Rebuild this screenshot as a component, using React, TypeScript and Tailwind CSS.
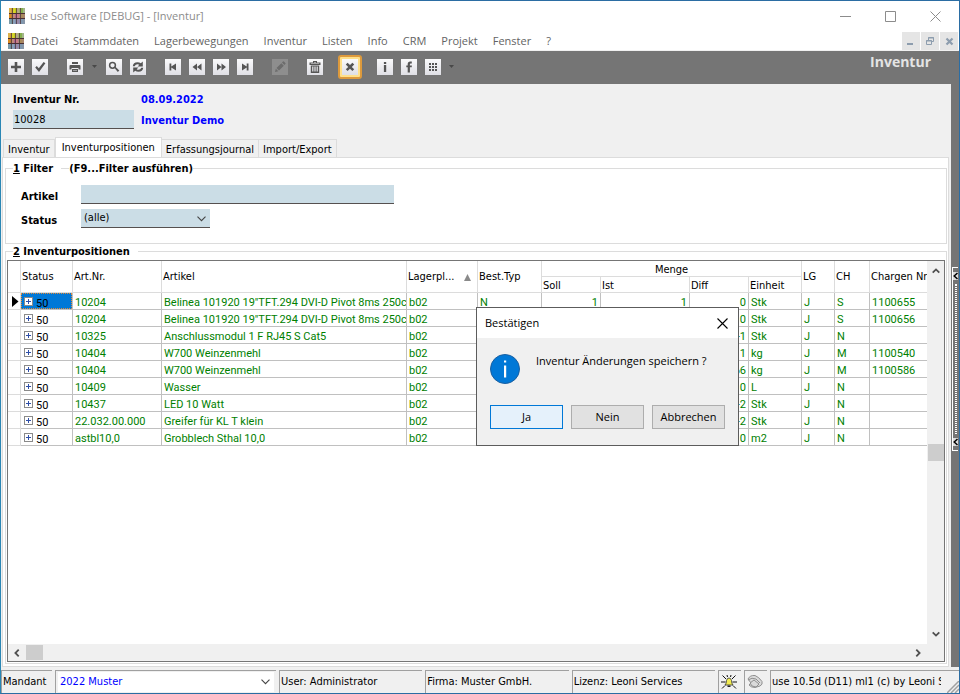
import { useState } from "react"
import type { ReactNode } from "react"

const MENU_ITEMS = ["Datei", "Stammdaten", "Lagerbewegungen", "Inventur", "Listen", "Info", "CRM", "Projekt", "Fenster", "?"]

const TABS = ["Inventur", "Inventurpositionen", "Erfassungsjournal", "Import/Export"]

type Position = {
    artNr: string
    artikel: string
    typ?: string
    soll?: string
    ist?: string
    diff: string
    einheit: string
    ch: string
    charge: string
}

const POSITIONS: Position[] = [
    { artNr: "10204", artikel: 'Belinea 101920 19"TFT.294 DVI-D Pivot 8ms 250cd', typ: "N", soll: "1", ist: "1", diff: "0", einheit: "Stk", ch: "S", charge: "1100655" },
    { artNr: "10204", artikel: 'Belinea 101920 19"TFT.294 DVI-D Pivot 8ms 250cd', diff: "0", einheit: "Stk", ch: "S", charge: "1100656" },
    { artNr: "10325", artikel: "Anschlussmodul 1 F RJ45 S Cat5", diff: "-1", einheit: "Stk", ch: "N", charge: "" },
    { artNr: "10404", artikel: "W700 Weinzenmehl", diff: "1", einheit: "kg", ch: "M", charge: "1100540" },
    { artNr: "10404", artikel: "W700 Weinzenmehl", diff: "66", einheit: "kg", ch: "M", charge: "1100586" },
    { artNr: "10409", artikel: "Wasser", diff: "0", einheit: "L", ch: "N", charge: "" },
    { artNr: "10437", artikel: "LED 10 Watt", diff: "-2", einheit: "Stk", ch: "N", charge: "" },
    { artNr: "22.032.00.000", artikel: "Greifer für KL T klein", diff: "-2", einheit: "Stk", ch: "N", charge: "" },
    { artNr: "astbl10,0", artikel: "Grobblech Sthal 10,0", diff: "0", einheit: "m2", ch: "N", charge: "" },
]

function AppLogo() {
    const tops = ["#dcb04a", "#c99a3e", "#d6d52a", "#c3c81c", "#b7a98a", "#9fb06a", "#86b04e", "#a3b58a"]
    const mids = ["#d98a1f", "#b87a3a", "#c08a7a", "#b0608c", "#c77a8a", "#b08a7a", "#a88a5a", "#a8866a"]
    const lows = ["#7a9aa8", "#6f8f9c", "#8aa0b8", "#7f8cb0", "#9a8aa8", "#8a90b0", "#7f98b0", "#8796a8"]
    return (
        <svg width="16" height="16" viewBox="0 0 16 16" aria-hidden="true">
            {tops.map((color, i) => (
                <g key={color}>
                    <rect x={i * 2} y="0" width="2" height="6" fill={color} />
                    <rect x={i * 2} y="6" width="2" height="5" fill={mids[i]} />
                    <rect x={i * 2} y="11" width="2" height="5" fill={lows[i]} />
                </g>
            ))}
            <path d="M3.500 0v16M7.500 0v16M11.500 0v16" stroke="#4a3436" strokeOpacity=".75" />
            <path d="M0 5.500h16M0 10.500h16" stroke="#4a2f34" />
        </svg>
    )
}

function Chevron({ className = "" }: { className?: string }) {
    return (
        <svg width="9" height="6" viewBox="0 0 9 6" className={className} aria-hidden="true">
            <path d="M.5 .7 4.5 4.7 8.5 .7" fill="none" stroke="#444" strokeWidth="1.1" />
        </svg>
    )
}

function ScrollArrow({ rotate = "" }: { rotate?: string }) {
    return (
        <svg width="8" height="8" viewBox="0 0 8 8" className={rotate} aria-hidden="true">
            <path d="M.7 5.7 4 2.4 7.3 5.7" fill="none" stroke="#505050" strokeWidth="1.8" />
        </svg>
    )
}

function ToolButton({ label, className = "", dim, children }: { label: string; className?: string; dim?: boolean; children: ReactNode }) {
    return (
        <button aria-label={label} className={`w-4 h-4 shrink-0 ${dim ? "bg-[#8e8e8e]" : "bg-linear-to-b from-[#fafafb] to-[#dfdfe5]"} ${className}`}>
            <svg width="16" height="16" viewBox="0 0 16 16" fill={dim ? "#6c6c6c" : "#555555"}>
                {children}
            </svg>
        </button>
    )
}

function DropArrow({ className = "" }: { className?: string }) {
    return (
        <svg width="5" height="3" viewBox="0 0 5 3" className={className} aria-hidden="true">
            <path d="M0 0h5L2.5 3z" fill="#484848" />
        </svg>
    )
}

function Toolbar() {
    return (
        <div className="h-[33px] shrink-0 flex items-center justify-between bg-[#757575] pl-[7px] pr-7">
            <div className="flex items-center gap-2 pb-0.5">
                <ToolButton label="Neu">
                    <path d="M6.7 3h2.6v3.7H13v2.6H9.3V13H6.7V9.3H3V6.7h3.7z" />
                </ToolButton>
                <ToolButton label="Speichern">
                    <path d="M3.2 8.6 4.8 7l2 2.2L11.6 3l1.8 1.3L7 13z" />
                </ToolButton>
                <ToolButton label="Drucken" className="ml-[11px]">
                    <path d="M5 3h6v2H5zM3.500 6h9q1 0 1 1v3.500h-2V9h-7v1.500h-2V7q0-1 1-1z" />
                    <path d="M5 10h6v3H5zM6 10.900h4v.6H6z" fillRule="evenodd" />
                </ToolButton>
                <DropArrow className="mx-px" />
                <ToolButton label="Suchen">
                    <circle cx="6.500" cy="6.300" r="2.900" fill="none" stroke="#555555" strokeWidth="1.500" />
                    <path d="m8.400 8.800 1-1 3.900 3.700-1.500 1.500z" />
                </ToolButton>
                <ToolButton label="Aktualisieren">
                    <path d="M2.800 7.200Q3.200 3.300 7.500 3.200q2 0 3.300 1L12.800 2.400v5H7.600l1.700-1.700Q8.600 5.100 7.500 5.200 5.400 5.300 4.700 7.200z" />
                    <path d="M13.200 8.800Q12.800 12.700 8.500 12.800q-2 0-3.300-1L3.200 13.600v-5h5.200L6.700 10.300q.7.600 1.800.5 2.100-.1 2.800-2z" />
                </ToolButton>
                <ToolButton label="Erster" className="ml-[11px]">
                    <path d="M4.500 4.500h1.800v3L11 4.500v7L6.300 8.600v2.900H4.500z" />
                </ToolButton>
                <ToolButton label="Zurück">
                    <path d="M8 4.500v7L3.500 8zM12.500 4.500v7L8 8z" />
                </ToolButton>
                <ToolButton label="Weiter">
                    <path d="M4 4.500v7L8.500 8zM8.500 4.500v7L13 8z" />
                </ToolButton>
                <ToolButton label="Letzter">
                    <path d="M11.500 4.500H9.700v3L5 4.500v7l4.700-2.900v2.900h1.800z" />
                </ToolButton>
                <ToolButton label="Bearbeiten" dim className="ml-[11px]">
                    <path d="m3 13 .8-3.300 2.500 2.500zM4.500 9l4.800-4.800 2.500 2.500L7 11.500zM10 3.500l1-1q.6-.4 1.200.2l1.200 1.200q.5.600 0 1.200l-1 1z" />
                </ToolButton>
                <ToolButton label="Löschen" className="ml-[11px]">
                    <path d="M6 2h4v1.500h3.500V6h-11V3.500H6zM7 3v.6h2V3zM3.800 4.500v.6h8.400v-.6z" fillRule="evenodd" />
                    <path d="M3.800 6.600h8.400V14H3.800zM5.200 7.500v5h1.200v-5zm2.200 0v5h1.200v-5zm2.200 0v5h1.200v-5z" fillRule="evenodd" />
                </ToolButton>
                <div className="ml-[7px] w-6 h-6 flex items-center justify-center rounded-[3px] border-2 border-[#de9a3c] bg-[#ffe08a]">
                    <ToolButton label="Abbrechen">
                        <path d="m3.800 5.500 1.800-1.800L8 6l2.400-2.300 1.800 1.800L9.800 7.900l2.400 2.300-1.800 1.800L8 9.700 5.600 12l-1.800-1.800 2.400-2.300z" />
                    </ToolButton>
                </div>
                <ToolButton label="Info" className="ml-[7px]">
                    <path d="M6.900 3h2.300v2H6.900zM6.900 6h2.300v7H6.900z" />
                </ToolButton>
                <ToolButton label="Favorit">
                    <path d="M6.700 13.500V8.300H5.300V6.400h1.400V5q0-2.500 2.500-2.500h1.600v1.900H9.700q-.8 0-.8.900v1.100h2l-.2 1.900H8.900v5.200z" />
                </ToolButton>
                <ToolButton label="Tabelle">
                    <path d="M4 4h2v2H4zM7 4h2v2H7zM10 4h2v2h-2zM4 7h2v2H4zM7 7h2v2H7zM10 7h2v2h-2zM4 10h2v2H4zM7 10h2v2H7zM10 10h2v2h-2z" />
                </ToolButton>
                <DropArrow />
            </div>
            <h1 className="self-start font-['Open_Sans',sans-serif] font-bold text-[14px] leading-[22px] text-[#e4e4e4]">Inventur</h1>
        </div>
    )
}

function FilterBox() {
    return (
        <fieldset className="mt-[3px] border border-[#dcdcdc] pl-[15px] pr-4 pt-[9px] pb-[15px]">
            <legend className="-ml-2 flex items-center font-bold leading-[15px]">
                <span><u>1</u> Filter</span>
                <span className="ml-2 w-2 h-px bg-[#dcdcdc]" />
                <span>(F9...Filter ausführen)</span>
            </legend>
            <div className="grid grid-cols-[60px_1fr] items-center gap-y-[5px]">
                <label htmlFor="artikel" className="h-[19px] pt-1 font-bold">Artikel</label>
                <input id="artikel" className="w-[313px] h-[19px] px-[3px] bg-[#cbdde6] border-b border-[#55504f] outline-none" />
                <label htmlFor="status" className="h-[19px] pt-1 font-bold">Status</label>
                <div className="relative w-[129px]">
                    <select id="status" className="block w-full h-[19px] px-[3px] appearance-none bg-[#cbdde6] border-b border-[#55504f] outline-none">
                        <option>(alle)</option>
                    </select>
                    <Chevron className="absolute right-1 top-[7px] pointer-events-none" />
                </div>
            </div>
        </fieldset>
    )
}

const TH = "border-r border-b border-[#dcdcdc] pl-px pt-px text-left font-normal whitespace-nowrap overflow-hidden"
const TD = "h-[17px] border-r border-b border-[#c0c0c0] pl-0.5 pt-1 leading-3 whitespace-nowrap overflow-hidden"
const TD_NUM = "h-[17px] border-r border-b border-[#c0c0c0] pr-0.5 pt-1 leading-3 text-right whitespace-nowrap"

function PositionTable() {
    return (
        <table className="w-full table-fixed border-separate border-spacing-0">
            <colgroup>
                <col className="w-[13px]" />
                <col className="w-[52px]" />
                <col className="w-[89px]" />
                <col className="w-[245px]" />
                <col className="w-[71px]" />
                <col className="w-16" />
                <col className="w-[59px]" />
                <col className="w-[89px]" />
                <col className="w-[59px]" />
                <col className="w-[53px]" />
                <col className="w-[33px]" />
                <col className="w-[35px]" />
                <col />
            </colgroup>
            <thead>
                <tr className="h-4">
                    <th rowSpan={2} className={TH} />
                    <th rowSpan={2} className={TH}>Status</th>
                    <th rowSpan={2} className={TH}>Art.Nr.</th>
                    <th rowSpan={2} className={TH}>Artikel</th>
                    <th rowSpan={2} className={TH}>
                        <span className="flex items-center justify-between pr-1.5">
                            Lagerpl...
                            <svg width="7" height="7" viewBox="0 0 7 7" aria-hidden="true"><path d="M0 7 3.500 0 7 7z" fill="#8a8a8a" /></svg>
                        </span>
                    </th>
                    <th rowSpan={2} className={TH}>Best.Typ</th>
                    <th colSpan={4} className="h-4 pt-0.5 leading-[13px] border-r border-b border-[#dcdcdc] font-normal">Menge</th>
                    <th rowSpan={2} className={TH}>LG</th>
                    <th rowSpan={2} className={TH}>CH</th>
                    <th rowSpan={2} className="border-b border-[#dcdcdc] pl-px text-left font-normal whitespace-nowrap overflow-hidden">Chargen Nr</th>
                </tr>
                <tr className="h-4 leading-[13px]">
                    <th className={TH}>Soll</th>
                    <th className={TH}>Ist</th>
                    <th className={TH}>Diff</th>
                    <th className={TH}>Einheit</th>
                </tr>
            </thead>
            <tbody className="font-['Roboto',sans-serif] text-[#008000]">
                {POSITIONS.map((row, i) => (
                    <tr key={i}>
                        <td className="border-r border-b border-[#dcdcdc] pl-1">
                            {i === 0 && (
                                <svg width="7" height="11" viewBox="0 0 7 11" className="block" aria-hidden="true"><path d="M0 0 6.500 5.500 0 11z" fill="#000" /></svg>
                            )}
                        </td>
                        <td className="h-[17px] border-r border-b border-[#c0c0c0] text-black">
                            <div className={`h-4 flex items-center gap-[3px] pl-[3px] ${i === 0 ? "bg-[#0078d7] outline-1 -outline-offset-1 outline-dotted outline-[#e08a3a]" : ""}`}>
                                <button aria-label="Aufklappen" className="w-[9px] h-[9px] border border-[#8a8a8a] bg-white">
                                    <svg width="7" height="7" viewBox="0 0 7 7" className="block"><path d="M3 1h1v2h2v1H4v2H3V4H1V3h2z" fill="#2f4fa8" /></svg>
                                </button>
                                <span className="pt-1.5 leading-[10px]">50</span>
                            </div>
                        </td>
                        <td className={TD}>{row.artNr}</td>
                        <td className={TD}>{row.artikel}</td>
                        <td className={TD}>b02</td>
                        <td className={TD}>{row.typ}</td>
                        <td className={TD_NUM}>{row.soll}</td>
                        <td className={TD_NUM}>{row.ist}</td>
                        <td className={TD_NUM}>{row.diff}</td>
                        <td className={TD}>{row.einheit}</td>
                        <td className={TD}>J</td>
                        <td className={TD}>{row.ch}</td>
                        <td className="h-[17px] border-b border-[#c0c0c0] pl-0.5 pt-1 leading-3">{row.charge}</td>
                    </tr>
                ))}
            </tbody>
        </table>
    )
}

function PositionGrid() {
    return (
        <fieldset className="flex-1 min-h-0 flex flex-col border border-[#dcdcdc] px-px pt-px pb-px">
            <legend className="ml-1.5 pr-2 font-bold leading-[15px]"><u>2</u> Inventurpositionen</legend>
            <div className="h-full flex flex-col border border-[#757575]">
                <div className="flex-1 min-h-0 flex">
                    <div className="flex-1 min-w-0 overflow-hidden">
                        <PositionTable />
                    </div>
                    {/* Vertical scrollbar */}
                    <div className="w-[17px] flex flex-col items-center justify-between bg-[#f0f0f0] pt-1.5 pb-1.5">
                        <ScrollArrow />
                        <div className="w-4 flex-1 flex flex-col">
                            <div className="flex-1" />
                            <div className="h-[17px] bg-[#cdcdcd]" />
                            <div className="flex-1" />
                        </div>
                        <ScrollArrow rotate="rotate-180" />
                    </div>
                </div>
                {/* Horizontal scrollbar */}
                <div className="h-[17px] shrink-0 flex items-center bg-[#f0f0f0] pl-[5px] pr-[22px]">
                    <ScrollArrow rotate="-rotate-90" />
                    <div className="ml-[5px] mr-auto w-[17px] h-[15px] bg-[#cdcdcd]" />
                    <ScrollArrow rotate="rotate-90" />
                </div>
            </div>
        </fieldset>
    )
}

function SideSplitter() {
    return (
        <div className="w-2 shrink-0 bg-[#757575] flex flex-col items-center pt-[183px]">
            <div className="w-1.5 h-[184px] flex flex-col items-center justify-between py-1 border-l border-y border-white bg-[#757575]">
                <svg width="5" height="8" viewBox="0 0 5 8" className="bg-[#dcdcdc]" aria-hidden="true"><path d="M4.500 1 1.200 4l3.300 3" fill="none" stroke="#000" strokeWidth="1.500" /></svg>
                <div className="flex-1 my-1 w-0.5 border-x border-dotted border-white" />
                <svg width="5" height="8" viewBox="0 0 5 8" className="bg-[#dcdcdc]" aria-hidden="true"><path d="M4.500 1 1.200 4l3.300 3" fill="none" stroke="#000" strokeWidth="1.500" /></svg>
            </div>
        </div>
    )
}

const PANEL = "border-t border-l border-[#a0a0a0] flex items-center pl-px whitespace-nowrap overflow-hidden"

function StatusBar() {
    return (
        <footer className="h-[26px] shrink-0 flex gap-[3px] bg-[#f0f0f0] pt-[3px]">
            <label htmlFor="mandant" className={`w-[51px] ${PANEL}`}>Mandant</label>
            <div className="w-[221px] relative border-t border-l border-[#a0a0a0] px-0.5 pt-px">
                <select id="mandant" className="block w-full h-5 pl-0.5 appearance-none bg-white text-[#0000ff] outline-none">
                    <option>2022 Muster</option>
                </select>
                <Chevron className="absolute right-1.5 top-2 pointer-events-none" />
            </div>
            <div className={`flex-1 ${PANEL}`}>User: Administrator</div>
            <div className={`flex-1 ${PANEL}`}>Firma: Muster GmbH.</div>
            <div className={`flex-1 ${PANEL}`}>Lizenz: Leoni Services</div>
            <div className={`w-[23px] ${PANEL}`}>
                <svg width="18" height="16" viewBox="0 0 18 16" aria-hidden="true">
                    <path d="M5 11Q6.500 9.500 6.500 6.500 7 4 9 4t2.500 2.500Q11.500 9.500 13 11z" fill="#f2ec50" stroke="#333" strokeWidth=".8" />
                    <path d="M7.500 11.500h3v1.500h-3z" fill="#222" />
                    <path d="M2.500 1.500l3.500 3.500M15.500 1.500 12 5M1 8h4.500M12.500 8H17M2 14.500l3-3M16 14.500l-3-3M7 1l.5 2M11 1l-.5 2" stroke="#111" />
                </svg>
            </div>
            <div className={`w-[23px] ${PANEL}`}>
                <svg width="18" height="16" viewBox="0 0 18 16" fill="none" stroke="#909090" aria-hidden="true">
                    <path d="M2 5q2-4 7-3.500Q13 3 16 7.500q1 3-2 4.500l-5 1.500q-4 0-6-2.500l2-2z" fill="#dadada" />
                    <path d="M2 6q4-3 8-1l4 4M4 9l4-3 5 4-3 3-4-1z" />
                </svg>
            </div>
            <div className="w-[189px] flex items-center justify-between border-t border-l border-[#a0a0a0]">
                <span className="pl-px w-[170px] whitespace-nowrap overflow-hidden">use 10.5d (D11) ml1 (c) by Leoni So</span>
                <svg width="12" height="12" viewBox="0 0 12 12" className="self-end" aria-hidden="true"><path d="M0 12 12 0M4 12 12 4M8 12 12 8" stroke="#a0a0a0" strokeWidth="1.500" /></svg>
            </div>
        </footer>
    )
}

const DIALOG_BUTTON = "flex-1 h-6 border text-[11px]"

function ConfirmDialog({ onClose }: { onClose: () => void }) {
    return (
        <div role="dialog" aria-label="Bestätigen" className="absolute left-[475px] top-[306px] w-[263px] border border-[#5c5c5c] bg-[#f0f0f0] font-['Open_Sans',sans-serif] text-[11px] text-black">
            <div className="h-[30px] flex items-center justify-between bg-white pl-2 pr-2.5">
                <span>Bestätigen</span>
                <button aria-label="Schließen" onClick={onClose}>
                    <svg width="11" height="11" viewBox="0 0 11 11"><path d="M.5.5l10 10M10.500.5l-10 10" stroke="#000" strokeWidth="1.100" /></svg>
                </button>
            </div>
            <div className="flex items-start gap-4 pl-[13px] pt-4">
                <svg width="30" height="30" viewBox="0 0 30 30" aria-hidden="true">
                    <circle cx="15" cy="15" r="14.500" fill="#0078d7" stroke="#1a5fa0" />
                    <path d="M14 6.500h2.200v2H14zM14 11.500h2.200v12H14z" fill="#fff" />
                </svg>
                <p className="leading-[14px]">Inventur Änderungen speichern ?</p>
            </div>
            <div className="flex gap-2 px-[13px] pt-[21px] pb-4">
                <button onClick={onClose} className={`${DIALOG_BUTTON} border-[#0078d7] bg-[#e5f1fb]`}>Ja</button>
                <button onClick={onClose} className={`${DIALOG_BUTTON} border-[#adadad] bg-[#e1e1e1]`}>Nein</button>
                <button onClick={onClose} className={`${DIALOG_BUTTON} border-[#adadad] bg-[#e1e1e1]`}>Abbrechen</button>
            </div>
        </div>
    )
}

export default function App() {
    const [activeTab, setActiveTab] = useState("Inventurpositionen")
    const [dialogOpen, setDialogOpen] = useState(true)

    return (
        <div className="relative h-screen flex flex-col border border-[#2b6da3] border-l-[#2a86b4] bg-[#f0f0f0] font-['DejaVu_Sans_Condensed',sans-serif] text-[11px] leading-4 text-black overflow-hidden">
            {/* Title bar */}
            <div className="h-[30px] shrink-0 flex items-center bg-white pl-2 pr-[18px] font-['Open_Sans',sans-serif] text-[11px] text-[#8c8c8c]">
                <AppLogo />
                <span className="ml-[5px] mr-auto">use Software [DEBUG] - [Inventur]</span>
                <div className="flex items-center gap-[34px]">
                    <button aria-label="Minimieren"><svg width="11" height="11" viewBox="0 0 11 11"><path d="M0 5.500h11" stroke="#8c8c8c" /></svg></button>
                    <button aria-label="Maximieren"><svg width="11" height="11" viewBox="0 0 11 11"><path d="M.5.5h10v10H.5z" fill="none" stroke="#8c8c8c" /></svg></button>
                    <button aria-label="Beenden"><svg width="11" height="11" viewBox="0 0 11 11"><path d="M.5.5l10 10M10.500.5l-10 10" stroke="#8c8c8c" /></svg></button>
                </div>
            </div>

            {/* Menu bar */}
            <nav className="h-5 shrink-0 flex items-center bg-white border-b border-[#f0f0f0] pt-px pl-[7px] font-['Open_Sans',sans-serif] text-[11px] text-[#636363]">
                <AppLogo />
                <div className="ml-[7px] mr-auto flex gap-[15px]">
                    {MENU_ITEMS.map((item) => (
                        <button key={item}>{item}</button>
                    ))}
                </div>
                <div className="flex gap-px mr-px">
                    <button aria-label="Fenster minimieren" className="w-[18px] h-[18px] bg-[#e5e5e5]">
                        <svg width="18" height="18" viewBox="0 0 18 18"><path d="M5 11h6v2H5z" fill="#8d9dae" /></svg>
                    </button>
                    <button aria-label="Fenster wiederherstellen" className="w-[18px] h-[18px] bg-[#e5e5e5]">
                        <svg width="18" height="18" viewBox="0 0 18 18" fill="none" stroke="#8d9dae"><path d="M7.500 8V5.500h5v4H11M7 6h6M5.500 8.500h5v4h-5zM5 9h6" /></svg>
                    </button>
                    <button aria-label="Fenster schließen" className="w-[18px] h-[18px] bg-[#e5e5e5]">
                        <svg width="18" height="18" viewBox="0 0 18 18"><path d="M6.500 6.500l6 6M12.500 6.500l-6 6" stroke="#8d9dae" strokeWidth="2.200" /></svg>
                    </button>
                </div>
            </nav>

            <Toolbar />

            <div className="flex-1 min-h-0 flex">
                <main className="flex-1 min-w-0 flex flex-col pl-px pr-0.5">
                    <div className="grid grid-cols-[121px_1fr] gap-x-[7px] pl-[11px] pt-2 font-bold">
                        <label htmlFor="inventur-nr">Inventur Nr.</label>
                        <span className="text-[#0000ff]">08.09.2022</span>
                        <input id="inventur-nr" defaultValue="10028" className="mt-0.5 h-[19px] px-px bg-[#cbdde6] border-b border-[#55504f] font-normal outline-none" />
                        <span className="mt-[5px] text-[#0000ff]">Inventur Demo</span>
                    </div>

                    {/* Tabs */}
                    <div role="tablist" className="flex items-end pl-px mt-2">
                        {TABS.map((tab) => (
                            <button
                                key={tab}
                                role="tab"
                                aria-selected={activeTab === tab}
                                onClick={() => setActiveTab(tab)}
                                className={activeTab === tab
                                    ? "h-[21px] -mb-px px-1.5 pb-px border border-b-0 border-[#dcdcdc] bg-white"
                                    : "h-[18px] px-1 pt-0.5 border-t border-r first:border-l border-[#dcdcdc]"}
                            >
                                {tab}
                            </button>
                        ))}
                    </div>

                    <div className="flex-1 min-h-0 flex flex-col bg-white border border-[#dcdcdc] pl-0.5 pr-px pb-0.5">
                        <FilterBox />
                        <PositionGrid />
                    </div>
                </main>
                <SideSplitter />
            </div>

            <StatusBar />

            {dialogOpen && <ConfirmDialog onClose={() => setDialogOpen(false)} />}
        </div>
    )
}
